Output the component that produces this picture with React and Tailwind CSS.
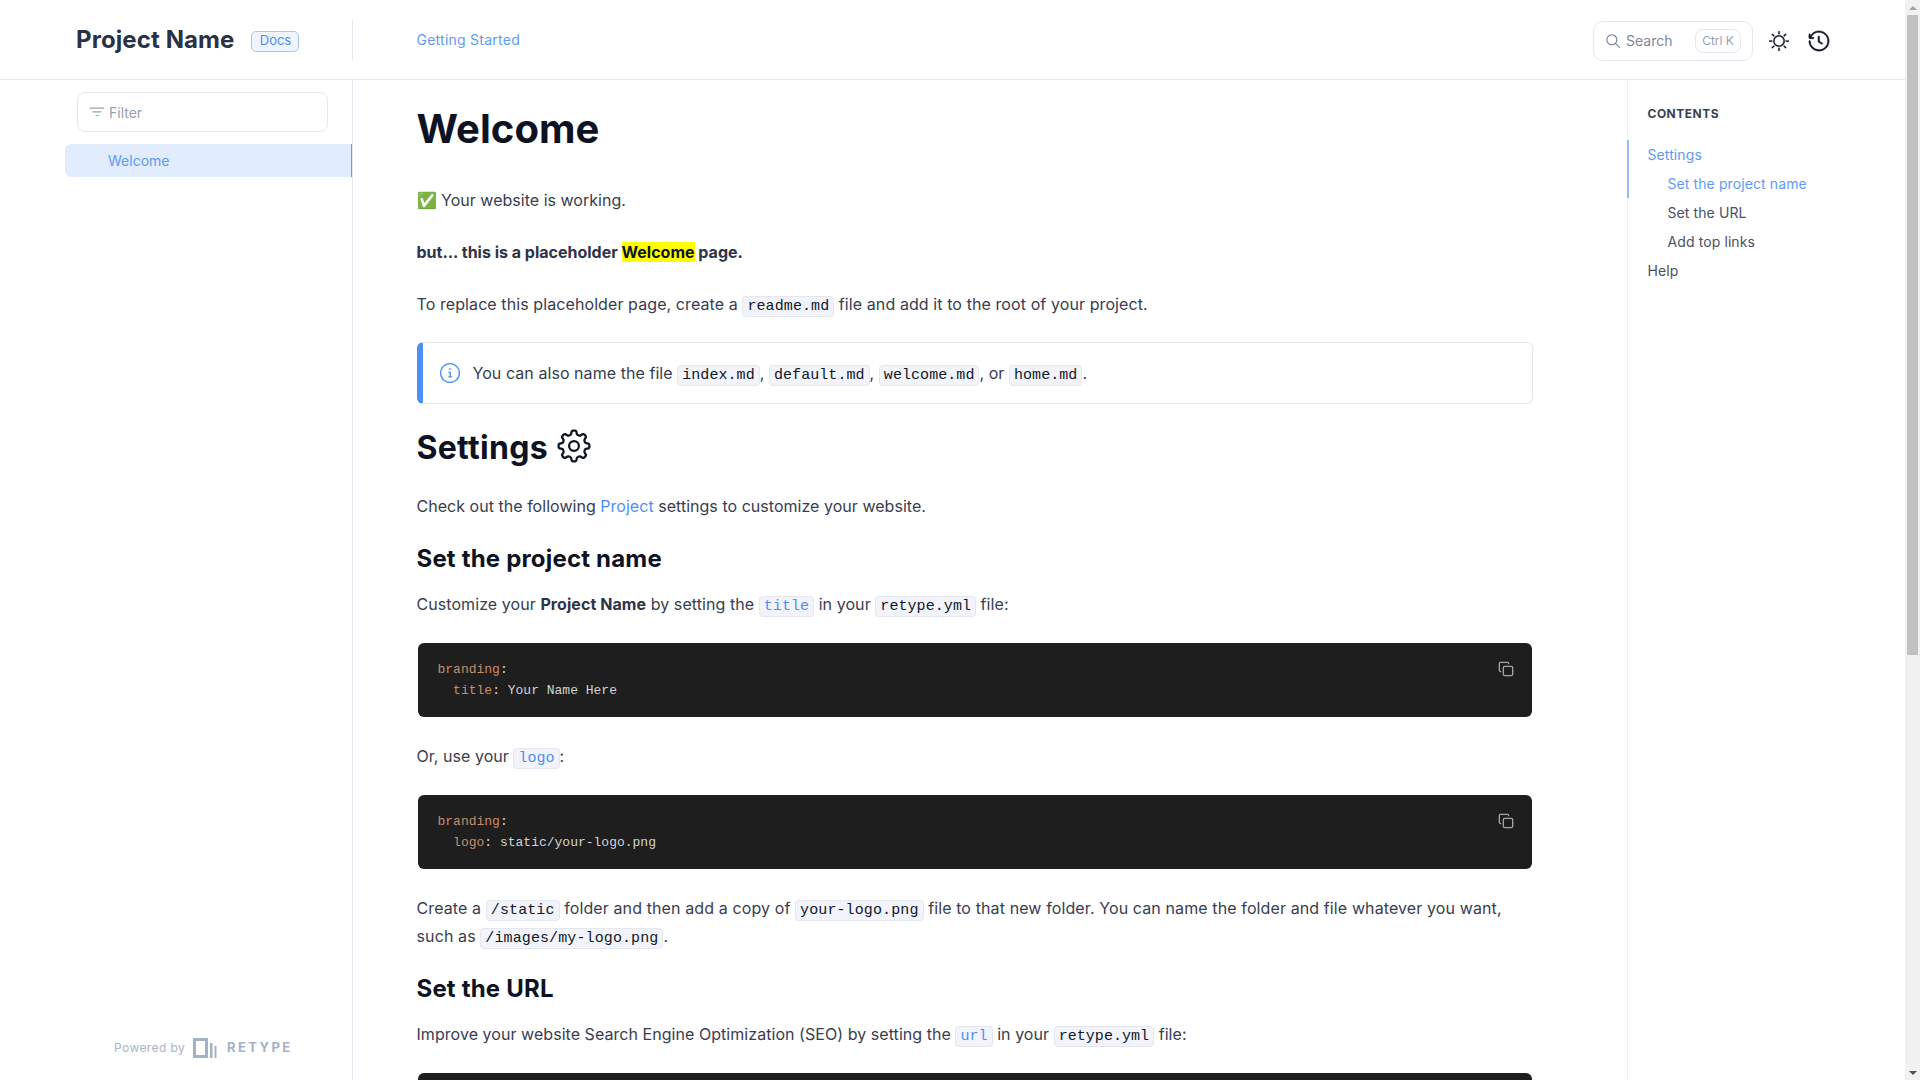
import React from "react";
import { GoGear, GoInfo, GoHistory, GoSun, GoSearch, GoFilter } from "react-icons/go";
import { Copy } from "lucide-react";

const C = ({ children }) => (
  <code className="font-['Liberation_Mono',monospace] text-[15px] leading-none text-[#0f172a] bg-[#f3f4fb] border border-[#e5e7f0] rounded-[4px] px-[4px] py-[1px]">{children}</code>
);
const L = ({ children }) => (
  <code className="font-['Liberation_Mono',monospace] text-[15px] leading-none text-[#4d8ff5] bg-[#f3f4fb] border border-[#e5e7f0] rounded-[4px] px-[4px] py-[1px]">{children}</code>
);
const P = ({ children, className = "" }) => <p className={`leading-7 ${className}`}>{children}</p>;
const H3 = ({ children, className = "" }) => (
  <h3 className={`text-2xl leading-8 font-bold tracking-[0.18px] text-[#0d1322] ${className}`}>{children}</h3>
);
const K = ({ children }) => <span className="text-[#c78d6b]">{children}</span>;

const Code = ({ children, className = "" }) => (
  <div className={`relative mx-px bg-[#1e1e1e] rounded-[6px] px-[20px] py-4 font-['Liberation_Mono',monospace] text-[13px] leading-[21px] text-[#d4d4d4] whitespace-pre ${className}`}>
    {children}
    <Copy className="absolute right-[18px] top-[18px] text-[#a3a3a3]" size={16} />
  </div>
);

function Header() {
  return (
    <header className="h-20 shrink-0 flex items-center bg-white border-b border-[#e5e7f0]">
      <div className="w-[353px] shrink-0 h-10 flex items-center pl-[76px] border-r border-[#e5e7f0]">
        <span className="text-2xl font-bold tracking-[0.1px] text-[#2b3145]">Project Name</span>
        <span className="ml-[17px] mt-[3px] h-[21px] w-[48px] flex items-center justify-center text-[13px] text-[#4d8ff5] bg-[#eff4fe] border border-[#a9c5f8] rounded-[5px]">Docs</span>
      </div>
      <a className="ml-[63.5px] text-sm tracking-[0.25px] text-[#5e9bf7]">Getting Started</a>
      <div className="ml-auto flex items-center mt-[2px]">
        <div className="w-[160px] h-10 flex items-center pl-[11px] pr-[11px] border border-[#e5e7f0] rounded-[10px] text-sm text-[#7e869b]">
          <GoSearch size={16} className="text-[#6f7a90]" />
          <span className="ml-[5px]">Search</span>
          <span className="ml-auto w-[46px] h-[24px] flex items-center justify-center border border-[#e5e7f0] rounded-[8px] text-xs text-[#98a0b3]">Ctrl K</span>
        </div>
        <GoSun size={20} className="ml-4 text-[#0d1322]" stroke="currentColor" strokeWidth={0.4} />
        <GoHistory size={22} className="ml-[19px] mr-[75px] text-[#0d1322]" stroke="currentColor" strokeWidth={0.6} />
      </div>
    </header>
  );
}

function Sidebar() {
  return (
    <aside className="w-[353px] h-full shrink-0 border-r border-[#e5e7f0] flex flex-col">
      <div className="mt-3 ml-[77px] w-[251px] h-10 flex items-center pl-[10px] border border-[#e5e7f0] rounded-[8px] text-sm text-[#98a0b3]">
        <GoFilter size={18} />
        <span className="ml-[3px] mt-[1px]">Filter</span>
      </div>
      <div className="mt-3 ml-[65px] h-[33px] flex items-center pl-[43px] text-sm text-[#5e9bf7] bg-[#e1ecfd] rounded-l-[6px] border-r border-[#5e9bf7]">Welcome</div>
      <div className="mt-auto mb-[22px] ml-[114px] flex items-center text-xs text-[#aab3c8]">
        <span className="tracking-[0.4px]">Powered by</span>
        <svg width="24" height="20" viewBox="0 0 24 20" className="ml-[8px]" fill="#a5b1c8">
          <path d="M0 0h15v20H0zM3 3v14h9V3z" fillRule="evenodd" />
          <rect x="17" y="5" width="2.5" height="15" />
          <rect x="21.5" y="8" width="2" height="12" />
        </svg>
        <span className="ml-[10px] text-[13px] font-bold tracking-[2.4px] text-[#a5b1c8]">RETYPE</span>
      </div>
    </aside>
  );
}

function Toc() {
  return (
    <aside className="ml-[94.5px] w-[278px] h-full shrink-0 border-l border-[#eceef4] text-sm tracking-[0.1px] text-[#4a5065]">
      <div className="pl-[19.5px] pt-[25px] text-xs font-bold h-[60px] leading-[18px] text-[#3a3f50] tracking-[0.5px] uppercase">Contents</div>
      <div className="relative pl-[19.5px]">
        <div className="absolute -left-px top-0 w-[2px] h-[58px] bg-[#93bbf9]" />
        <div className="h-[29px] leading-[30px] text-[#5e9bf7]">Settings</div>
        <div className="h-[29px] leading-[29px] pl-5 text-[#5e9bf7]">Set the project name</div>
        <div className="h-[29px] leading-[29px] pl-5">Set the URL</div>
        <div className="h-[29px] leading-[29px] pl-5">Add top links</div>
        <div className="h-[29px] leading-[29px]">Help</div>
      </div>
    </aside>
  );
}

function Main() {
  return (
    <main className="ml-[63.5px] w-[1116px] h-full shrink-0 overflow-hidden text-[#383d50] text-base">
      <h1 className="text-[40px] leading-[48px] font-bold tracking-[0.05px] text-[#0d1322] mt-[25px] mb-[33px]">Welcome</h1>
      <P className="mb-6 tracking-[0.02px]">✅ Your website is working.</P>
      <P className="mb-6 font-bold text-[#2e3348]">but... this is a placeholder <mark className="bg-[#ffff00] text-[#0d1322]">Welcome</mark> page.</P>
      <P className="mb-6 tracking-[0.09px]">To replace this placeholder page, create a <C>readme.md</C> file and add it to the root of your project.</P>
      <div className="h-[62px] flex items-center border border-[#e5e7f0] border-l-[6px] border-l-[#4d8ff5] rounded-[6px] pl-4">
        <GoInfo size={22} className="text-[#4d8ff5]" />
        <span className="ml-[12px] leading-7 tracking-[0.06px]">You can also name the file <C>index.md</C>, <C>default.md</C>, <C>welcome.md</C>, or <C>home.md</C>.</span>
      </div>
      <h2 className="mt-6 mb-6 h-10 flex items-center text-[32px] leading-10 font-bold tracking-[0.3px] text-[#0d1322]">Settings <GoGear size={36} className="ml-2 -mt-[4px]" /></h2>
      <P className="tracking-[0.03px]">Check out the following <a className="text-[#4d8ff5]">Project</a> settings to customize your website.</P>
      <H3 className="mt-[23px] mb-[15px]">Set the project name</H3>
      <P className="tracking-[0.07px]">Customize your <b className="text-[#2e3348]">Project Name</b> by setting the <L>title</L> in your <C>retype.yml</C> file:</P>
      <Code className="mt-[25px]">
        <K>branding</K>:{"\n"}  <K>title</K>: Your Name Here
      </Code>
      <P className="mt-[25px] tracking-[0.04px]">Or, use your <L>logo</L>:</P>
      <Code className="mt-[25px]">
        <K>branding</K>:{"\n"}  <K>logo</K>: static/your-logo.png
      </Code>
      <P className="mt-[25px] tracking-[0.11px]">Create a <C>/static</C> folder and then add a copy of <C>your-logo.png</C> file to that new folder. You can name the folder and file whatever you want, such as <C>/images/my-logo.png</C>.</P>
      <H3 className="mt-[23px] mb-[15px]">Set the URL</H3>
      <P className="tracking-[0.05px]">Improve your website Search Engine Optimization (SEO) by setting the <L>url</L> in your <C>retype.yml</C> file:</P>
      <Code className="mt-[25px] h-[74px]" />
    </main>
  );
}

function Scrollbar() {
  return (
    <div className="w-[15px] h-full shrink-0 bg-[#f1f1f1] flex flex-col items-center">
      <div className="h-[15px] shrink-0 flex items-center justify-center">
        <div className="w-0 h-0 border-x-[4px] border-x-transparent border-b-[4px] border-b-[#a3a3a3]" />
      </div>
      <div className="w-[11px] h-[640px] shrink-0 bg-[#c1c1c1]" />
      <div className="mt-auto h-[15px] shrink-0 flex items-center justify-center">
        <div className="w-0 h-0 border-x-[4px] border-x-transparent border-t-[4px] border-t-[#505050]" />
      </div>
    </div>
  );
}

export default function App() {
  return (
    <div className="h-screen overflow-hidden flex font-['Inter',sans-serif] bg-white">
      <div className="flex-1 min-w-0 h-full flex flex-col">
        <Header />
        <div className="flex-1 min-h-0 flex">
          <Sidebar />
          <Main />
          <Toc />
        </div>
      </div>
      <Scrollbar />
    </div>
  );
}
